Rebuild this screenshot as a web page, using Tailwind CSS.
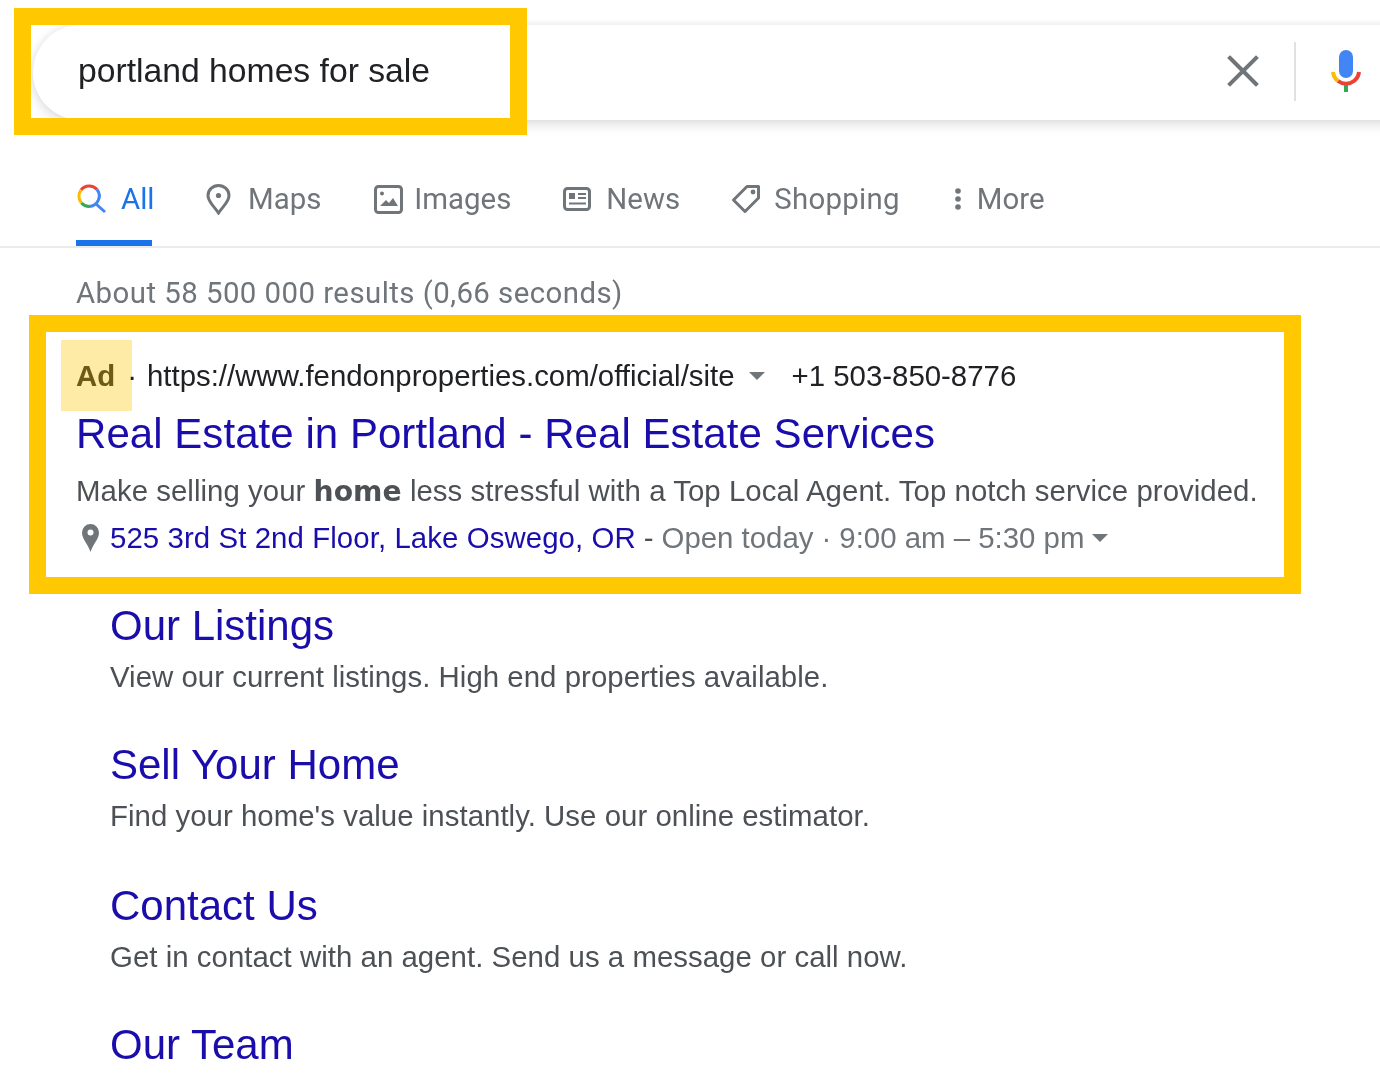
<!DOCTYPE html>
<html lang="en">
  <head>
    <meta charset="UTF-8" />
    <script src="https://cdn.jsdelivr.net/npm/@tailwindcss/browser@4"></script>
    <title>portland homes for sale</title>
  </head>
  <body class="bg-white">
    <div class="relative w-[1380px] h-[1080px] overflow-hidden bg-white blur-[0.5px] font-['Liberation_Sans',Arial,sans-serif]">
      <!-- search bar -->
      <div class="pt-[25px] pl-[33px]">
        <div class="flex items-center h-[95px] w-[1400px] pl-[45px] pb-[4px] rounded-l-[48px] bg-white shadow-[0_4px_12px_rgba(32,33,36,0.16),0_-2px_6px_rgba(32,33,36,0.04)]">
          <span class="text-[33.7px] text-[#202124]">portland homes for sale</span>
          <svg class="absolute left-[1224px] top-[52px] w-[38px] h-[38px]" viewBox="0 0 38 38" fill="none" stroke="#70757a" stroke-width="4" stroke-linecap="square"><path d="M6 6 L32 32 M32 6 L6 32" /></svg>
          <div class="absolute left-[1294px] top-[42px] w-[2px] h-[59px] bg-[#dfe1e5]"></div>
          <svg class="absolute left-[1330px] top-[48px] w-[32px] h-[46px]" viewBox="0 0 32 46" fill="none">
            <rect x="9" y="2" width="14" height="28" rx="7" fill="#4285f4" />
            <path d="M3 24 A13 13 0 0 0 8 33" stroke="#fbbc05" stroke-width="4" />
            <path d="M8 33 A13 13 0 0 0 24 33 A13 13 0 0 0 29 24" stroke="#ea4335" stroke-width="4" />
            <rect x="14" y="37" width="4" height="7" fill="#34a853" />
          </svg>
        </div>
      </div>

      <!-- tabs -->
      <nav class="flex items-start h-[128px] pl-[76px] border-b-2 border-[#ebebeb] text-[29.4px] leading-[40px] text-[#70757a] font-['Roboto',sans-serif]">
        <div class="flex items-center gap-[15px] h-[126px] w-[76px] pt-[38px] border-b-[6px] border-[#1a73e8] text-[#1a73e8]">
          <svg class="w-[30px] h-[30px] shrink-0" viewBox="0 0 30 30" fill="none" stroke-width="3">
            <path d="M21 5.5 A10.5 10.5 0 0 0 5 6" stroke="#ea4335" />
            <path d="M5 6 A10.5 10.5 0 0 0 5.5 19" stroke="#fbbc05" />
            <path d="M5.5 19 A10.5 10.5 0 0 0 13 22.5" stroke="#34a853" />
            <path d="M13 22.5 A10.5 10.5 0 0 0 21 5.5" stroke="#4285f4" />
            <path d="M20 20 L29 28" stroke="#4285f4" />
          </svg>
          <span>All</span>
        </div>
        <div class="flex items-center gap-[17px] ml-[54px] pt-[59px]">
          <svg class="w-[25px] h-[31px] shrink-0" viewBox="0 0 25 31" fill="none" stroke="#70757a" stroke-width="3"><path d="M12.5 29 C8 22 2 18 2 11.5 A10.5 10 0 0 1 23 11.5 C23 18 17 22 12.5 29 Z" /><circle cx="12.5" cy="11.5" r="2.6" fill="#70757a" stroke="none" /></svg>
          <span>Maps</span>
        </div>
        <div class="flex items-center gap-[11px] ml-[53px] pt-[59px]">
          <svg class="w-[29px] h-[29px] shrink-0" viewBox="0 0 29 29" fill="none"><rect x="1.5" y="1.5" width="26" height="26" rx="3" stroke="#70757a" stroke-width="3" /><circle cx="8" cy="8.5" r="2" fill="#70757a" /><path d="M6 21 L12 15 L15 18 L19 13 L24 21 Z" fill="#70757a" /></svg>
          <span>Images</span>
        </div>
        <div class="flex items-center gap-[15px] ml-[52px] pt-[59px]">
          <svg class="w-[28px] h-[24px] shrink-0" viewBox="0 0 28 24" fill="none"><rect x="1.5" y="1.5" width="25" height="21" rx="3" stroke="#70757a" stroke-width="3" /><rect x="6" y="6" width="6" height="6" fill="#70757a" /><path d="M15 7 H23 M15 11 H23 M6 16.5 H23" stroke="#70757a" stroke-width="2" /></svg>
          <span>News</span>
        </div>
        <div class="flex items-center gap-[13px] ml-[51px] pt-[59px]">
          <svg class="w-[30px] h-[30px] shrink-0" viewBox="0 0 30 30" fill="none"><path d="M2.5 16 L16 2.5 H27.5 V14 L14 27.5 Z" stroke="#70757a" stroke-width="3" stroke-linejoin="round" /><circle cx="22" cy="8" r="2.4" fill="#70757a" /></svg>
          <span class="tracking-[0.3px]">Shopping</span>
        </div>
        <div class="flex items-center gap-[15px] ml-[54px] pt-[59px]">
          <svg class="w-[8px] h-[24px] shrink-0" viewBox="0 0 8 24" fill="#70757a"><circle cx="4" cy="4" r="2.8" /><circle cx="4" cy="12" r="2.8" /><circle cx="4" cy="20" r="2.8" /></svg>
          <span>More</span>
        </div>
      </nav>

      <!-- results -->
      <main class="pl-[76px]">
        <p class="mt-[22px] h-[46px] leading-[46px] text-[29.4px] tracking-[0.45px] text-[#70757a] font-['Roboto',sans-serif]">About 58 500 000 results (0,66 seconds)</p>

        <div class="relative flex items-center mt-[36px] h-[46px] pt-[2px] text-[29.4px] text-[#202124]">
          <div class="absolute left-[-15px] top-[-12px] w-[71px] h-[71px] bg-[#feeba6]"></div>
          <span class="relative font-bold text-[#6e5a17]">Ad</span>
          <span class="relative ml-[12px] mr-[10px] text-[#202124]">·</span>
          <span class="relative">https://www.fendonproperties.com/official/site</span>
          <span class="ml-[14px] w-0 h-0 border-x-[8px] border-t-[8px] border-x-transparent border-t-[#70757a]"></span>
          <span class="ml-[27px]">+1 503-850-8776</span>
        </div>
        <h3 class="mt-[10px] h-[52px] leading-[52px] text-[42px] tracking-[0.05px] text-[#1a0dab]">Real Estate in Portland - Real Estate Services</h3>
        <p class="mt-[8px] h-[46px] leading-[46px] text-[29.4px] tracking-[0.04px] text-[#4d5156]">Make selling your <b class="font-bold text-[28.2px] font-['DejaVu_Sans',sans-serif]">home</b> less stressful with a Top Local Agent. Top notch service provided.</p>
        <div class="flex items-center h-[46px] pt-[2px] text-[29.4px] text-[#70757a]">
          <svg class="ml-[6px] w-[17px] h-[28px] shrink-0" viewBox="0 0 17 28"><path fill="#70757a" fill-rule="evenodd" d="M8.5 28 C6 20 0 15 0 8.5 A8.5 8.5 0 0 1 17 8.5 C17 15 11 20 8.5 28 Z M8.5 5.5 A3 3 0 1 0 8.5 11.5 A3 3 0 1 0 8.5 5.5 Z" /></svg>
          <a class="ml-[11px] tracking-[0.08px] text-[#1a0dab]">525 3rd St 2nd Floor, Lake Oswego, OR</a>
          <span class="ml-[8px] text-[#4d5156]">-</span>
          <span class="ml-[8px]">Open today</span>
          <span class="ml-[8px] mr-[8px]">·</span>
          <span>9:00 am – 5:30 pm</span>
          <span class="ml-[8px] w-0 h-0 border-x-[8px] border-t-[8px] border-x-transparent border-t-[#70757a]"></span>
        </div>

        <!-- sitelinks -->
        <div class="pl-[34px]">
          <h3 class="mt-[40px] h-[52px] leading-[52px] text-[42px] text-[#1a0dab]">Our Listings</h3>
          <p class="mt-[2px] h-[46px] leading-[46px] text-[29.4px] tracking-[0.03px] text-[#4d5156]">View our current listings. High end properties available.</p>
          <h3 class="mt-[39px] h-[52px] leading-[52px] text-[42px] text-[#1a0dab]">Sell Your Home</h3>
          <p class="mt-[2px] h-[46px] leading-[46px] text-[29.4px] tracking-[0.03px] text-[#4d5156]">Find your home's value instantly. Use our online estimator.</p>
          <h3 class="mt-[41px] h-[52px] leading-[52px] text-[42px] text-[#1a0dab]">Contact Us</h3>
          <p class="mt-[2px] h-[46px] leading-[46px] text-[29.4px] tracking-[0.03px] text-[#4d5156]">Get in contact with an agent. Send us a message or call now.</p>
          <h3 class="mt-[39px] h-[52px] leading-[52px] text-[42px] text-[#1a0dab]">Our Team</h3>
        </div>
      </main>

      <!-- yellow highlight frames -->
      <div class="absolute left-[14px] top-[8px] w-[513px] h-[127px] border-[17px] border-[#ffc800]"></div>
      <div class="absolute left-[29px] top-[315px] w-[1272px] h-[279px] border-[17px] border-[#ffc800]"></div>
    </div>
  </body>
</html>
